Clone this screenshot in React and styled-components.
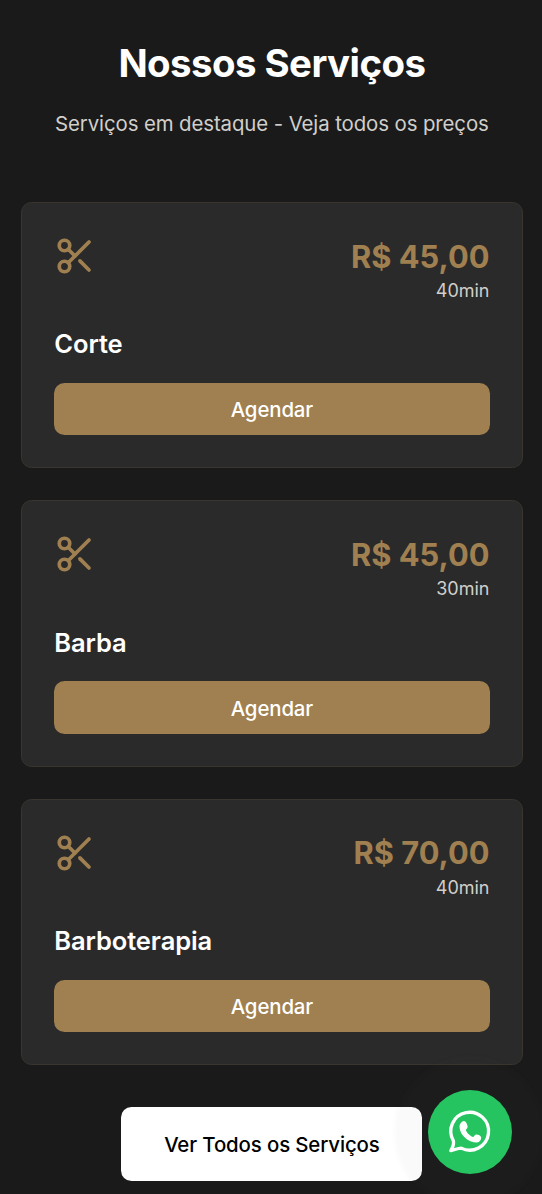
import styled, { createGlobalStyle } from "styled-components";
import { Scissors } from "lucide-react";

const GlobalStyle = createGlobalStyle`
  * {
    box-sizing: border-box;
  }
  body {
    margin: 0;
    background-color: #1a1a1a;
    font-family: Inter, "Liberation Sans", sans-serif;
    overflow: hidden;
  }
`;

const Section = styled.section`
  height: 1194px;
  padding: 40.3px 19.5px 0 21.3px;
  display: flex;
  flex-direction: column;
  overflow: hidden;
`;

const Header = styled.header`
  text-align: center;
  margin-bottom: 62.8px;
`;

const Title = styled.h2`
  margin: 0 0 20px;
  font-size: 38.4px;
  line-height: 47.4px;
  font-weight: 700;
  letter-spacing: -0.55px;
  color: white;
`;

const Subtitle = styled.p`
  margin: 0;
  font-size: 20.4px;
  line-height: 31.6px;
  letter-spacing: -0.1px;
  color: #d1cfcb;
`;

const List = styled.div`
  display: flex;
  flex-direction: column;
  gap: 32px;
`;

const Card = styled.article`
  height: 266.4px;
  padding: 32px;
  border: 1.3px solid #3a352e;
  border-radius: 10.5px;
  background-color: #2a2a2a;
`;

const CardTop = styled.div`
  display: flex;
  justify-content: space-between;
  align-items: flex-start;
  margin-bottom: 22.6px;
  color: #a08050;
`;

const PriceBox = styled.div`
  text-align: right;
`;

const Price = styled.div`
  padding-top: 0.6px;
  font-size: 30.8px;
  line-height: 42.1px;
  font-weight: 700;
`;

const Duration = styled.div`
  font-size: 18px;
  line-height: 25.8px;
  color: #d1cfcb;
`;

const Name = styled.h3`
  margin: 0 0 19.9px;
  font-size: 25.5px;
  line-height: 36.8px;
  font-weight: 600;
  letter-spacing: -0.1px;
  color: white;
`;

const Button = styled.button`
  width: 100%;
  height: 52.6px;
  padding: 1px 0 0;
  border: none;
  border-radius: 10.5px;
  background-color: #a08050;
  color: white;
  font-family: inherit;
  font-size: 20.4px;
  font-weight: 500;
  letter-spacing: -0.12px;
  cursor: pointer;
`;

const AllButton = styled(Button)`
  width: 301px;
  height: 74px;
  margin: 42.1px auto 0;
  flex-shrink: 0;
  background-color: white;
  color: black;
`;

const Whatsapp = styled.a`
  position: fixed;
  right: 30px;
  bottom: 20px;
  width: 84px;
  height: 84px;
  border-radius: 50%;
  display: flex;
  align-items: center;
  justify-content: center;
  background-color: #25c460;
  color: white;
  box-shadow: 0 0 4px 34px rgba(50, 105, 70, 0.03);
`;

const WhatsappIcon = () => (
  <svg width="50" height="50" viewBox="0 0 50 50" fill="none">
    <path
      d="M8.4 33.8A18.9 18.9 0 1 1 16.2 41.1C13 41.2 9.5 42.8 5.8 43.6C7.8 40.5 9 37 8.4 33.8Z"
      stroke="currentColor"
      strokeWidth="3.3"
      strokeLinejoin="round"
    />
    <path
      d="M18.8 14C16.2 14.5 14.5 17.3 14.5 20C15 28.3 23 35.3 32 35.6C34.6 35.2 36.3 32.8 36.2 30.4C35.8 28.6 32.6 27.2 30.8 27.6C29.6 28.2 29.2 29.8 28.2 30C25.4 29.2 21.8 25.9 20.9 23.2C21.1 22 23 21 22.6 19.2C22.1 17 20.8 14 18.8 14Z"
      fill="currentColor"
    />
  </svg>
);

const services = [
  { name: "Corte", price: "R$ 45,00", duration: "40min" },
  { name: "Barba", price: "R$ 45,00", duration: "30min" },
  { name: "Barboterapia", price: "R$ 70,00", duration: "40min" },
];

const App = () => {
  return (
    <>
      <GlobalStyle />
      <Section>
        <Header>
          <Title>Nossos Serviços</Title>
          <Subtitle>Serviços em destaque - Veja todos os preços</Subtitle>
        </Header>
        <List>
          {services.map((item) => (
            <Card key={item.name}>
              <CardTop>
                <Scissors size={42} strokeWidth={2.1} />
                <PriceBox>
                  <Price>{item.price}</Price>
                  <Duration>{item.duration}</Duration>
                </PriceBox>
              </CardTop>
              <Name>{item.name}</Name>
              <Button>Agendar</Button>
            </Card>
          ))}
        </List>
        <AllButton>Ver Todos os Serviços</AllButton>
      </Section>
      <Whatsapp href="#">
        <WhatsappIcon />
      </Whatsapp>
    </>
  );
};

export default App;
